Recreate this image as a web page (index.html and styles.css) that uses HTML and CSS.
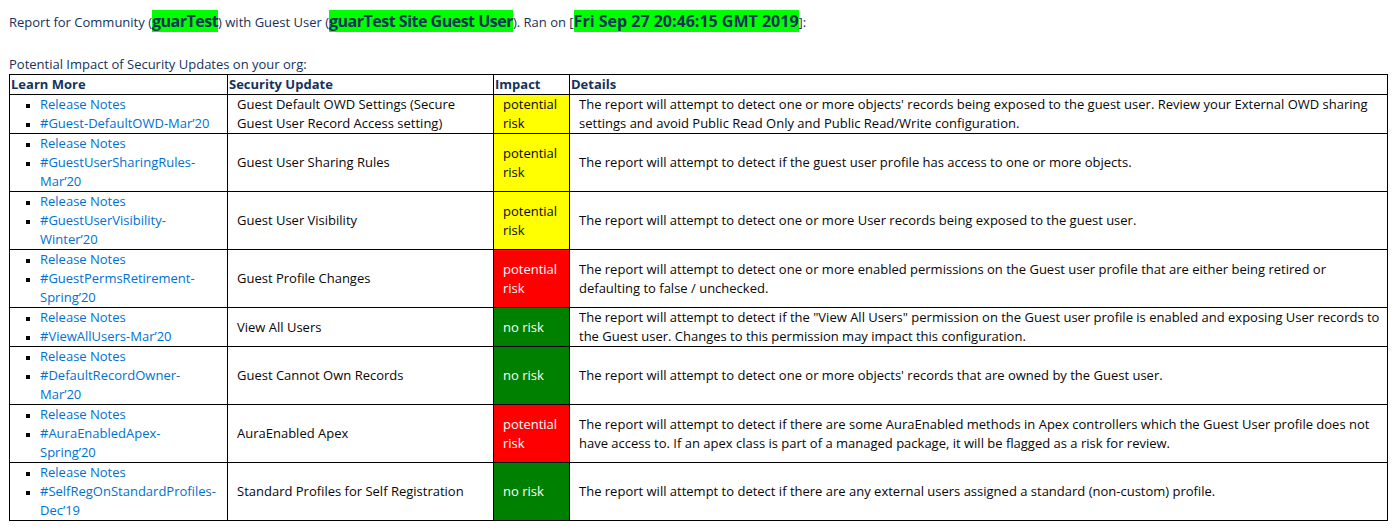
FILE: index.html
```html
<!DOCTYPE html>
<html>
<head>
<meta charset="utf-8">
<link rel="stylesheet" href="styles.css">
</head>
<body>
<p class="intro">Report for Community (<span class="hl">guarTest</span>) with Guest User (<span class="hl">guarTest Site Guest User</span>). Ran on [<span class="hl date">Fri Sep 27 20:46:15 GMT 2019</span>]:</p>
<p class="caption">Potential Impact of Security Updates on your org:</p>
<table class="report">
  <colgroup>
    <col class="c1"><col class="c2"><col class="c3"><col class="c4">
  </colgroup>
  <thead>
    <tr><th>Learn More</th><th>Security Update</th><th>Impact</th><th>Details</th></tr>
  </thead>
  <tbody>
    <tr>
      <td class="links"><ul><li><a href="#">Release Notes</a></li><li><a href="#">#Guest-DefaultOWD-Mar’20</a></li></ul></td>
      <td class="txt">Guest Default OWD Settings (Secure Guest User Record Access setting)</td>
      <td class="imp warn">potential risk</td>
      <td class="txt det">The report will attempt to detect one or more objects' records being exposed to the guest user. Review your External OWD sharing settings and avoid Public Read Only and Public Read/Write configuration.</td>
    </tr>
    <tr>
      <td class="links"><ul><li><a href="#">Release Notes</a></li><li><a href="#">#GuestUserSharingRules-Mar’20</a></li></ul></td>
      <td class="txt">Guest User Sharing Rules</td>
      <td class="imp warn">potential risk</td>
      <td class="txt det">The report will attempt to detect if the guest user profile has access to one or more objects.</td>
    </tr>
    <tr>
      <td class="links"><ul><li><a href="#">Release Notes</a></li><li><a href="#">#GuestUserVisibility-Winter’20</a></li></ul></td>
      <td class="txt">Guest User Visibility</td>
      <td class="imp warn">potential risk</td>
      <td class="txt det">The report will attempt to detect one or more User records being exposed to the guest user.</td>
    </tr>
    <tr>
      <td class="links"><ul><li><a href="#">Release Notes</a></li><li><a href="#">#GuestPermsRetirement-Spring’20</a></li></ul></td>
      <td class="txt">Guest Profile Changes</td>
      <td class="imp risk">potential risk</td>
      <td class="txt det">The report will attempt to detect one or more enabled permissions on the Guest user profile that are either being retired or defaulting to false / unchecked.</td>
    </tr>
    <tr>
      <td class="links"><ul><li><a href="#">Release Notes</a></li><li><a href="#">#ViewAllUsers-Mar’20</a></li></ul></td>
      <td class="txt">View All Users</td>
      <td class="imp ok">no risk</td>
      <td class="txt det">The report will attempt to detect if the "View All Users" permission on the Guest user profile is enabled and exposing User records to the Guest user. Changes to this permission may impact this configuration.</td>
    </tr>
    <tr>
      <td class="links"><ul><li><a href="#">Release Notes</a></li><li><a href="#">#DefaultRecordOwner-Mar’20</a></li></ul></td>
      <td class="txt">Guest Cannot Own Records</td>
      <td class="imp ok">no risk</td>
      <td class="txt det">The report will attempt to detect one or more objects' records that are owned by the Guest user.</td>
    </tr>
    <tr>
      <td class="links"><ul><li><a href="#">Release Notes</a></li><li><a href="#">#AuraEnabledApex-Spring’20</a></li></ul></td>
      <td class="txt">AuraEnabled Apex</td>
      <td class="imp risk">potential risk</td>
      <td class="txt det">The report will attempt to detect if there are some AuraEnabled methods in Apex controllers which the Guest User profile does not have access to. If an apex class is part of a managed package, it will be flagged as a risk for review.</td>
    </tr>
    <tr>
      <td class="links"><ul><li><a href="#">Release Notes</a></li><li><a href="#">#SelfRegOnStandardProfiles-Dec’19</a></li></ul></td>
      <td class="txt">Standard Profiles for Self Registration</td>
      <td class="imp ok">no risk</td>
      <td class="txt det">The report will attempt to detect if there are any external users assigned a standard (non-custom) profile.</td>
    </tr>
  </tbody>
</table>
</body>
</html>
```
FILE: styles.css
```css
body {
  margin: 0;
  padding: 0 9px;
  font-family: "Open Sans", "Noto Sans", sans-serif;
  font-size: 13px;
  line-height: 19px;
  color: #16325c;
  background: #fff;
}
.intro {
  margin: 0;
  padding-top: 12px;
  height: 29px;
}
.hl {
  background: #00ff00;
  font-weight: bold;
  font-size: 16px;
  letter-spacing: -0.5px;
}
.hl.date {
  letter-spacing: 0;
}
.caption {
  margin: 14px 0 0;
}
.report {
  border-collapse: collapse;
  width: 1379px;
  table-layout: fixed;
}
.c1 { width: 218px; }
.c2 { width: 266px; }
.c3 { width: 76px; }
.c4 { width: auto; }
.report th, .report td {
  border: 1px solid #000;
  padding: 0 1px;
  vertical-align: middle;
}
.report th {
  text-align: left;
  font-weight: bold;
  color: #16325c;
}
.report td {
  color: #080707;
}
.report td.txt, .report td.imp {
  padding: 0 8px 0 9px;
}
.report td.det {
  padding-right: 3px;
}
.report td.links {
  padding-right: 12px;
}
.links ul {
  margin: 0;
  padding-left: 29px;
  list-style: square;
}
.links li::marker {
  color: #080707;
  font-size: 10px;
}
.links a {
  color: #0070d2;
  text-decoration: none;
}
.warn { background: #ffff00; }
.risk { background: #ff0000; color: #fff !important; }
.ok { background: #008000; color: #fff !important; }
```
